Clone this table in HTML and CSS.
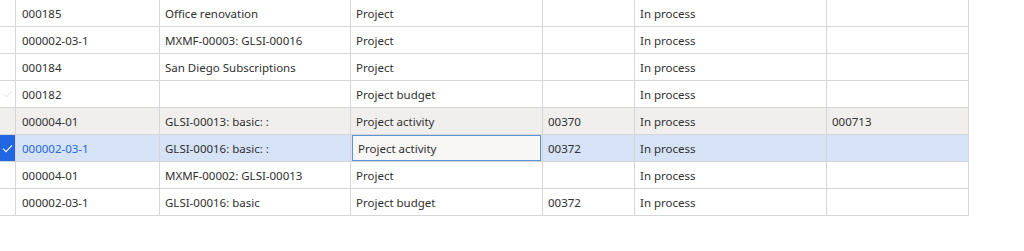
FILE: index.html
```html
<!DOCTYPE html>
<html>
<head>
<meta charset="utf-8">
<link rel="stylesheet" href="styles.css">
</head>
<body>
<div class="grid">
  <div class="row">
    <div class="cell check"></div>
    <div class="cell">000185</div>
    <div class="cell">Office renovation</div>
    <div class="cell">Project</div>
    <div class="cell"></div>
    <div class="cell">In process</div>
    <div class="cell"></div>
  </div>
  <div class="row">
    <div class="cell check"></div>
    <div class="cell">000002-03-1</div>
    <div class="cell">MXMF-00003: GLSI-00016</div>
    <div class="cell">Project</div>
    <div class="cell"></div>
    <div class="cell">In process</div>
    <div class="cell"></div>
  </div>
  <div class="row">
    <div class="cell check"></div>
    <div class="cell">000184</div>
    <div class="cell">San Diego Subscriptions</div>
    <div class="cell">Project</div>
    <div class="cell"></div>
    <div class="cell">In process</div>
    <div class="cell"></div>
  </div>
  <div class="row">
    <div class="cell check faint"><svg width="10" height="8" viewBox="0 0 10 8"><path d="M1 4.2 L3.6 6.8 L9 1.2" fill="none" stroke="#e2e2e2" stroke-width="1"/></svg></div>
    <div class="cell">000182</div>
    <div class="cell"></div>
    <div class="cell">Project budget</div>
    <div class="cell"></div>
    <div class="cell">In process</div>
    <div class="cell"></div>
  </div>
  <div class="row hover">
    <div class="cell check"></div>
    <div class="cell">000004-01</div>
    <div class="cell">GLSI-00013: basic: :</div>
    <div class="cell">Project activity</div>
    <div class="cell">00370</div>
    <div class="cell">In process</div>
    <div class="cell">000713</div>
  </div>
  <div class="row selected">
    <div class="cell check on"><svg width="11" height="9" viewBox="0 0 11 9"><path d="M1 4.6 L4 7.6 L10 1.4" fill="none" stroke="#ffffff" stroke-width="1.1"/></svg></div>
    <div class="cell link">000002-03-1</div>
    <div class="cell">GLSI-00016: basic: :</div>
    <div class="cell editing"><span class="input">Project activity</span></div>
    <div class="cell">00372</div>
    <div class="cell">In process</div>
    <div class="cell"></div>
  </div>
  <div class="row">
    <div class="cell check"></div>
    <div class="cell">000004-01</div>
    <div class="cell">MXMF-00002: GLSI-00013</div>
    <div class="cell">Project</div>
    <div class="cell"></div>
    <div class="cell">In process</div>
    <div class="cell"></div>
  </div>
  <div class="row">
    <div class="cell check"></div>
    <div class="cell">000002-03-1</div>
    <div class="cell">GLSI-00016: basic</div>
    <div class="cell">Project budget</div>
    <div class="cell">00372</div>
    <div class="cell">In process</div>
    <div class="cell"></div>
  </div>
</div>
</body>
</html>
```

FILE: styles.css
```css
html, body {
  margin: 0;
  padding: 0;
  background: #ffffff;
}

body {
  font-family: "Noto Sans", "Open Sans", sans-serif;
  font-size: 11.5px;
  color: #303030;
}

.grid {
  width: 969px;
  display: flex;
  flex-direction: column;
}

.row {
  display: grid;
  grid-template-columns: 16px 144px 191px 192px 92px 192px 142px;
  height: 27px;
  box-sizing: border-box;
  border-bottom: 1px solid #d6d6d6;
  background: #ffffff;
}

.row.hover {
  background: #f0efee;
}

.row.selected {
  background: #d6e3f7;
}

.cell {
  display: flex;
  align-items: center;
  padding-left: 5px;
  border-right: 1px solid #d6d6d6;
  white-space: nowrap;
  overflow: hidden;
}

.cell:first-child + .cell {
  padding-left: 6px;
}

.cell.check {
  padding: 0;
  justify-content: center;
}

.cell.check.on {
  background: #2266e3;
}

.cell.link {
  color: #2266e3;
}

.cell.editing {
  padding: 0;
  align-items: stretch;
}

.input {
  flex: 1;
  display: flex;
  align-items: center;
  margin: 0 1px 0 1px;
  padding-left: 5px;
  background: #f8f7f6;
  border: 1px solid #5b93dc;
}
```
